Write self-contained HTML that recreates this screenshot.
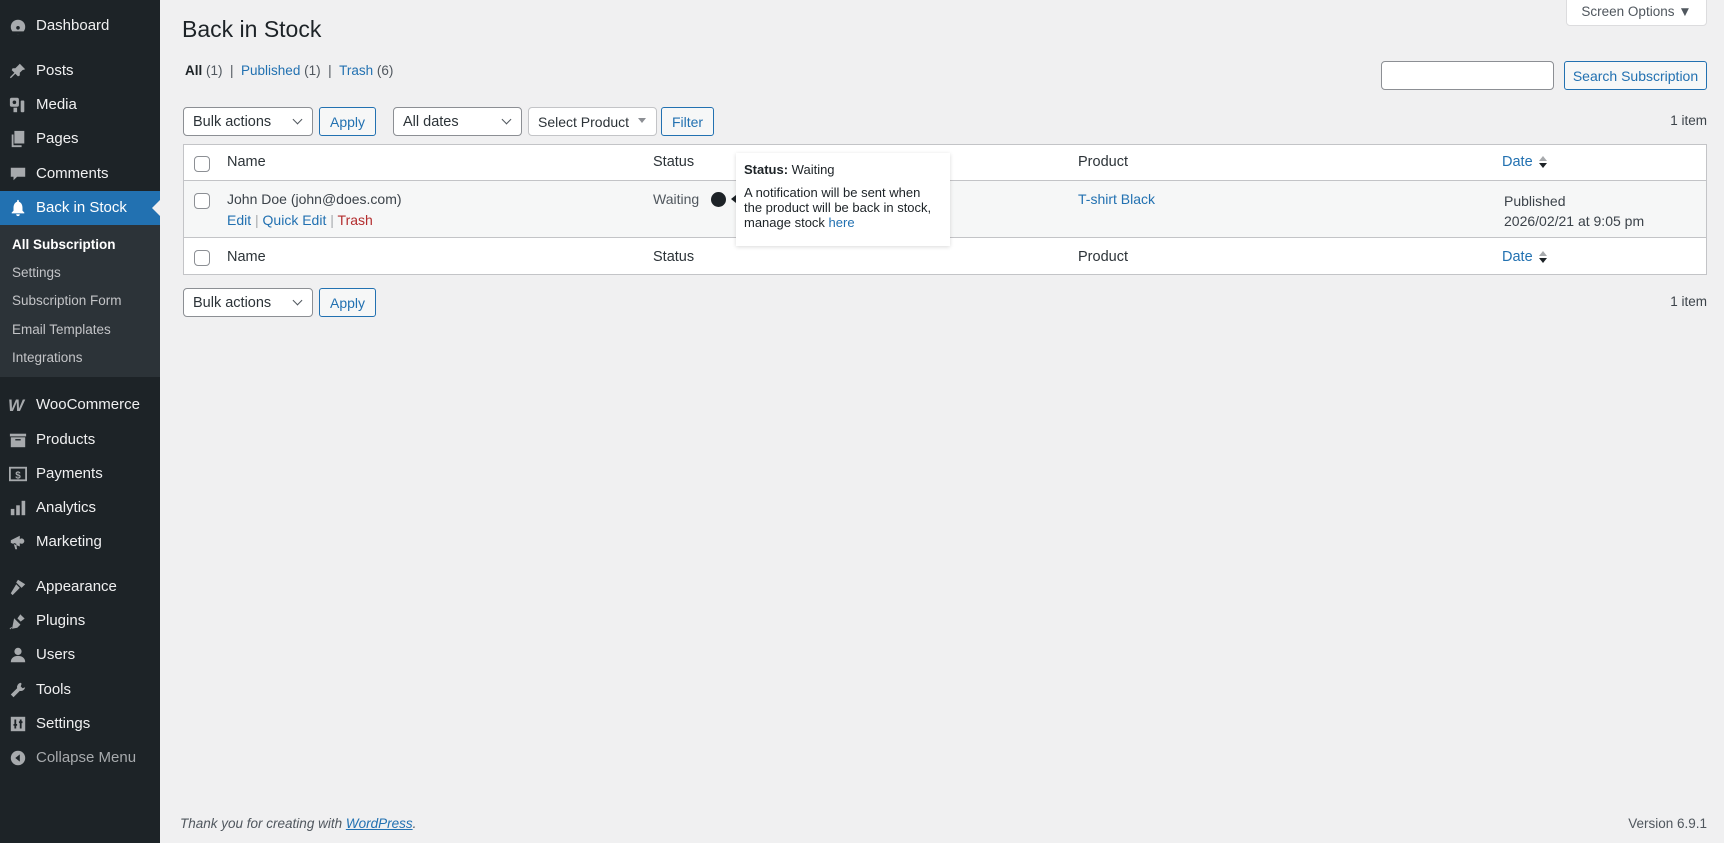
<!DOCTYPE html>
<html><head><meta charset="utf-8"><style>
*{box-sizing:border-box;margin:0;padding:0}
body{width:1724px;height:843px;overflow:hidden;background:#f0f0f1;font-family:"Liberation Sans",sans-serif;font-size:14px;color:#3c434a;position:relative}
.a{position:absolute;white-space:nowrap}
#side{position:absolute;left:0;top:0;width:160px;height:843px;background:#1d2327}
.mi{position:absolute;left:36px;color:#f0f0f1;font-size:15px;line-height:20px}
.ic{position:absolute;left:9px;width:18px;height:18px}
.sub{position:absolute;left:12px;color:#c3c4c7;font-size:13.5px;line-height:18px}
a{color:#2271b1;text-decoration:none}
.sel{position:absolute;background:#fff;border:1px solid #8c8f94;border-radius:4px;height:29px;padding:6px 0 0 9px;line-height:16px;color:#2c3338;font-size:14.5px;white-space:nowrap}
.sel.ch:after{content:"";position:absolute;right:11px;top:8px;width:6px;height:6px;border-right:1.5px solid #50575e;border-bottom:1.5px solid #50575e;transform:rotate(45deg)}
.btn{position:absolute;background:#f6f7f7;border:1px solid #2271b1;border-radius:3px;height:29px;padding-top:6px;line-height:16px;color:#2271b1;text-align:center;font-size:14px;white-space:nowrap}
.cb{position:absolute;left:11px;width:16px;height:16px;border:1px solid #8c8f94;border-radius:4px;background:#fff}
.th{position:absolute;color:#2c3338;font-size:14.5px}
.sort{display:inline-block;vertical-align:middle;margin-left:6px;width:8px;height:12px;position:relative}
.sort:before{content:"";position:absolute;top:0;left:0;border:4px solid transparent;border-bottom:5px solid #a7aaad;border-top:0}
.sort:after{content:"";position:absolute;bottom:0;left:0;border:4px solid transparent;border-top:5px solid #1d2327;border-bottom:0}
</style></head><body>
<div id="side">
<svg class="ic" style="top:17px" viewBox="0 0 20 20"><circle cx="10" cy="11" r="8" fill="#a7aaad"/><circle cx="10" cy="12" r="2" fill="#1d2327"/><rect x="3" y="16" width="14" height="3" fill="#1d2327"/></svg>
<div class="mi" style="top:16px">Dashboard</div>
<svg class="ic" style="top:62px" viewBox="0 0 20 20"><path d="M12 2l6 6-3 1-3 3 0 3-2 1-3-3-5 5-1-1 5-5-3-3 1-2 3 0 3-3z" fill="#a7aaad"/></svg>
<div class="mi" style="top:61px">Posts</div>
<svg class="ic" style="top:96px" viewBox="0 0 20 20"><rect x="1" y="2" width="10" height="10" rx="2" fill="#a7aaad"/><circle cx="6" cy="7" r="2" fill="#1d2327"/><rect x="5" y="13" width="4" height="5" fill="#a7aaad"/><rect x="13" y="5" width="4" height="13" rx="1" fill="#a7aaad"/></svg>
<div class="mi" style="top:95px">Media</div>
<svg class="ic" style="top:130px" viewBox="0 0 20 20"><rect x="6" y="1" width="11" height="14" fill="#a7aaad"/><path d="M3 5v14h11v-2H5V5z" fill="#a7aaad"/></svg>
<div class="mi" style="top:129px">Pages</div>
<svg class="ic" style="top:165px" viewBox="0 0 20 20"><path d="M2 3h16v10H9l-4 4v-4H2z" fill="#a7aaad"/></svg>
<div class="mi" style="top:164px">Comments</div>
<div style="position:absolute;left:0;top:191px;width:160px;height:34px;background:#2271b1"></div>
<div style="position:absolute;left:152px;top:200px;border:8px solid transparent;border-right:8px solid #f0f0f1;border-left:0"></div>
<svg class="ic" style="top:199px" viewBox="0 0 20 20"><path d="M10 1c1 0 1 1 1 2 3 1 4 4 4 7v3l2 2v1H3v-1l2-2v-3c0-3 1-6 4-7 0-1 0-2 1-2zM8 17h4a2 2 0 0 1-4 0z" fill="#fff"/></svg>
<div class="mi" style="top:198px;color:#fff">Back in Stock</div>
<div style="position:absolute;left:0;top:225px;width:160px;height:152px;background:#2c3338"></div>
<div class="sub" style="top:236px;color:#fff;font-weight:bold">All Subscription</div>
<div class="sub" style="top:264px">Settings</div>
<div class="sub" style="top:292px">Subscription Form</div>
<div class="sub" style="top:321px">Email Templates</div>
<div class="sub" style="top:349px">Integrations</div>
<div class="a" style="left:8px;top:396px;color:#a7aaad;font-weight:bold;font-style:italic;font-size:17px;letter-spacing:-2px">W</div>
<div class="mi" style="top:395px">WooCommerce</div>
<svg class="ic" style="top:431px" viewBox="0 0 20 20"><rect x="1" y="3" width="18" height="3" fill="#a7aaad"/><rect x="2" y="7" width="16" height="11" fill="#a7aaad"/><rect x="7" y="9" width="6" height="1.5" fill="#1d2327"/></svg>
<div class="mi" style="top:430px">Products</div>
<svg class="ic" style="top:465px" viewBox="0 0 20 20"><rect x="1" y="3" width="18" height="14" fill="none" stroke="#a7aaad" stroke-width="2"/><text x="10" y="15" font-size="11" font-weight="bold" fill="#a7aaad" text-anchor="middle" font-family="Liberation Sans">$</text></svg>
<div class="mi" style="top:464px">Payments</div>
<svg class="ic" style="top:499px" viewBox="0 0 20 20"><rect x="2" y="11" width="4" height="7" fill="#a7aaad"/><rect x="8" y="7" width="4" height="11" fill="#a7aaad"/><rect x="14" y="2" width="4" height="16" fill="#a7aaad"/></svg>
<div class="mi" style="top:498px">Analytics</div>
<svg class="ic" style="top:533px" viewBox="0 0 20 20"><path d="M2 8l10-5v12L2 11zM5 11l2 7h2l-1-6z" fill="#a7aaad"/><circle cx="14" cy="9" r="3" fill="#a7aaad"/></svg>
<div class="mi" style="top:532px">Marketing</div>
<svg class="ic" style="top:578px" viewBox="0 0 20 20"><path d="M10 2l8 5-4 4-6-6zM8 7l4 4-8 8-2-2z" fill="#a7aaad"/></svg>
<div class="mi" style="top:577px">Appearance</div>
<svg class="ic" style="top:612px" viewBox="0 0 20 20"><path d="M13 3l-3 4 3 3 4-3M6 8l6 6-3 3-5 1 1-5zM3 17l-2 2" fill="#a7aaad" stroke="#a7aaad"/></svg>
<div class="mi" style="top:611px">Plugins</div>
<svg class="ic" style="top:646px" viewBox="0 0 20 20"><circle cx="10" cy="6" r="4" fill="#a7aaad"/><path d="M2 18c0-5 4-7 8-7s8 2 8 7z" fill="#a7aaad"/></svg>
<div class="mi" style="top:645px">Users</div>
<svg class="ic" style="top:681px" viewBox="0 0 20 20"><path d="M13 2a5 5 0 0 0-4 6l-7 7 3 3 7-7a5 5 0 0 0 6-4l-3 1-2-2 1-3z" fill="#a7aaad"/></svg>
<div class="mi" style="top:680px">Tools</div>
<svg class="ic" style="top:715px" viewBox="0 0 20 20"><rect x="2" y="2" width="16" height="16" fill="#a7aaad"/><path d="M7 5v10M5 11h4M13 5v10M11 8h4" stroke="#1d2327" stroke-width="2"/></svg>
<div class="mi" style="top:714px">Settings</div>
<svg class="ic" style="top:749px" viewBox="0 0 20 20"><circle cx="10" cy="10" r="8" fill="#a7aaad"/><path d="M12 6v8l-5-4z" fill="#1d2327"/></svg>
<div class="mi" style="top:748px;color:#a7aaad">Collapse Menu</div>
</div>

<div class="a" style="left:1566px;top:-4px;width:141px;height:30px;background:#fff;border:1px solid #dcdcde;border-radius:0 0 4px 4px;font-size:13.5px;line-height:30px;text-align:center;color:#50575e">Screen Options ▼</div>
<div class="a" style="left:182px;top:16px;font-size:23px;color:#1d2327">Back in Stock</div>
<div class="a" style="left:185px;top:63px;font-size:13.5px;color:#50575e"><b style="color:#1d2327">All</b> (1) &nbsp;| &nbsp;<a>Published</a> (1) &nbsp;| &nbsp;<a>Trash</a> (6)</div>
<div class="a" style="left:1381px;top:61px;width:173px;height:29px;background:#fff;border:1px solid #8c8f94;border-radius:4px"></div>
<div class="btn" style="left:1564px;top:61px;width:143px">Search Subscription</div>

<div class="sel ch" style="left:183px;top:107px;width:130px">Bulk actions</div>
<div class="btn" style="left:319px;top:107px;width:57px">Apply</div>
<div class="sel ch" style="left:393px;top:107px;width:129px">All dates</div>
<div class="sel" style="left:528px;top:107px;width:129px;border-color:#c3c4c7;font-size:14px">Select Product</div>
<div class="a" style="left:638px;top:118px;border:4px solid transparent;border-top:5px solid #8c8f94"></div>
<div class="btn" style="left:661px;top:107px;width:53px">Filter</div>
<div class="a" style="right:17px;top:113px;font-size:13.5px">1 item</div>

<div class="a" style="left:183px;top:144px;width:1524px;height:131px;background:#fff;border:1px solid #c3c4c7"></div>
<div class="a" style="left:184px;top:180px;width:1522px;height:58px;background:#f6f7f7;border-top:1px solid #c3c4c7;border-bottom:1px solid #c3c4c7"></div>
<div class="cb" style="left:194px;top:156px"></div>
<div class="cb" style="left:194px;top:193px"></div>
<div class="cb" style="left:194px;top:250px"></div>
<div class="th" style="left:227px;top:154px">Name</div>
<div class="th" style="left:653px;top:154px">Status</div>
<div class="th" style="left:1078px;top:154px">Product</div>
<div class="th" style="left:1502px;top:154px"><a>Date</a><span class="sort"></span></div>
<div class="th" style="left:227px;top:249px">Name</div>
<div class="th" style="left:653px;top:249px">Status</div>
<div class="th" style="left:1078px;top:249px">Product</div>
<div class="th" style="left:1502px;top:249px"><a>Date</a><span class="sort"></span></div>

<div class="a" style="left:227px;top:191px;font-size:14px;color:#3c434a">John Doe (john@does.com)</div>
<div class="a" style="left:227px;top:212px;font-size:14px"><a>Edit</a> <span style="color:#a7aaad">|</span> <a>Quick Edit</a> <span style="color:#a7aaad">|</span> <a style="color:#b32d2e">Trash</a></div>
<div class="a" style="left:653px;top:191px;font-size:14px;color:#50575e">Waiting</div>
<div class="a" style="left:711px;top:192px;width:15px;height:15px;border-radius:50%;background:#1d2327"></div>
<div class="a" style="left:731px;top:195px;border:4px solid transparent;border-right:5px solid #1d2327;border-left:0"></div>
<div class="a" style="left:1078px;top:191px;font-size:14px"><a>T-shirt Black</a></div>
<div class="a" style="left:1504px;top:191px;font-size:14px;line-height:20px;color:#3c434a">Published<br>2026/02/21 at 9:05 pm</div>

<div class="a" style="left:736px;top:153px;width:214px;height:93px;background:#fff;box-shadow:0 1px 4px rgba(0,0,0,.15);padding:9px 8px;font-size:13px;line-height:15px;color:#1d2327"><b>Status:</b> Waiting<div style="margin-top:8px">A notification will be sent when<br>the product will be back in stock,<br>manage stock <a>here</a></div></div>

<div class="sel ch" style="left:183px;top:288px;width:130px">Bulk actions</div>
<div class="btn" style="left:319px;top:288px;width:57px">Apply</div>
<div class="a" style="right:17px;top:294px;font-size:13.5px">1 item</div>

<div class="a" style="left:180px;top:816px;font-size:13.5px;font-style:italic;color:#50575e">Thank you for creating with <a style="text-decoration:underline">WordPress</a>.</div>
<div class="a" style="right:17px;top:816px;font-size:13.5px;color:#50575e">Version 6.9.1</div>
</body></html>
